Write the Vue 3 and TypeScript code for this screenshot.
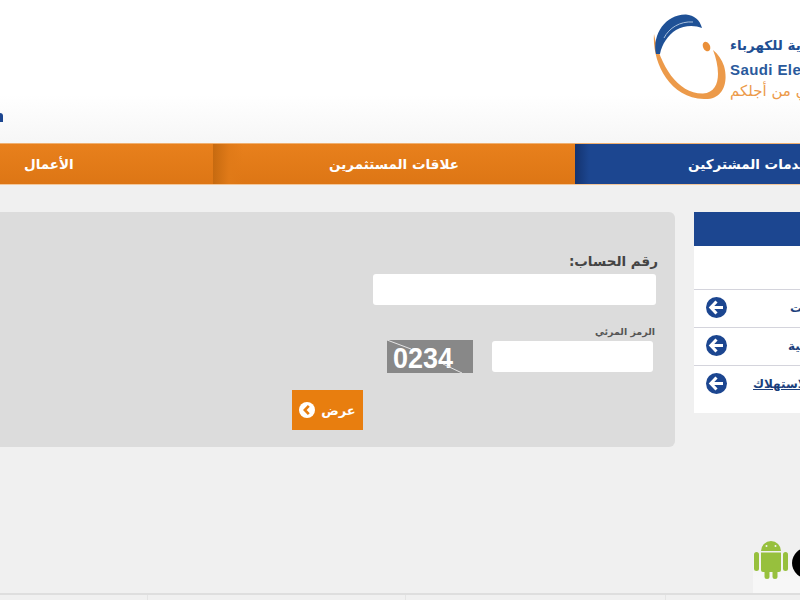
<script setup lang="ts">
const rows: { text: string; gap: number; under: boolean }[] = [
  { text: 'المدفوعات', gap: 63, under: false },
  { text: 'الخدمات الإلكترونية', gap: 61, under: false },
  { text: 'حاسبة الاستهلاك', gap: 26, under: true },
]
</script>

<template>
  <div class="page">
    <header class="top">
      <i class="fragment"></i>
      <div class="brand">
        <svg class="logo" viewBox="652 12 76 90" width="76" height="90" aria-hidden="true">
          <path d="M654 34C652 60 668 98 704 99C722 100 729 84 724 66C722 60 718 54 713 50C720 68 722 92 703 93.500C678 94 660 66 654 34Z" fill="#ec9a4a" />
          <path d="M656 54C652 34 666 14 686 14.500C694 15 700 20 702 28C695 25 684 25 676 30C668 35 662 44 660 54Z" fill="#1f5196" />
          <path d="M664 38C669 28 680 21 693 22" fill="none" stroke="#a9c0dc" stroke-width="1" />
          <ellipse cx="706.500" cy="46.500" rx="3.500" ry="5" transform="rotate(-25 706.500 46.500)" fill="#ea8f38" />
        </svg>
        <div class="words">
          <span class="ar-name">الشركة السعودية للكهرباء</span>
          <span class="en-name">Saudi Electricity Company</span>
          <span class="slogan">نمضي من أجلكم</span>
        </div>
      </div>
    </header>

    <nav class="menu">
      <a class="item first">الأعمال</a>
      <a class="item second">علاقات المستثمرين</a>
      <a class="item third">خدمات المشتركين</a>
    </nav>

    <main class="content">
      <section class="panel">
        <label class="label-main" dir="rtl">رقم الحساب:</label>
        <div class="field wide"></div>
        <label class="label-small" dir="rtl">الرمز المرئي</label>
        <div class="captcha-row">
          <svg class="captcha" viewBox="0 0 86 33" width="86" height="33" role="img">
            <rect width="86" height="33" fill="#888888" />
            <text x="6" y="28" class="captcha-text" textLength="60" lengthAdjust="spacingAndGlyphs">0234</text>
            <path d="M0 0L24 9M56 24L75 33" stroke="#e4e4e4" stroke-width="1" />
          </svg>
          <div class="field narrow"></div>
        </div>
        <button class="show" type="button">
          <svg viewBox="0 0 16 16" width="16" height="16" aria-hidden="true">
            <circle cx="8" cy="8" r="8" fill="#fff" />
            <path d="M9.800 3.800L5.800 8L9.800 12.200" fill="none" stroke="#e87e0f" stroke-width="2.600" />
          </svg>
          <span>عرض</span>
        </button>
      </section>

      <aside class="side">
        <div class="side-head"></div>
        <div class="side-space"></div>
        <a v-for="row in rows" :key="row.text" class="side-row">
          <svg viewBox="0 0 21 21" width="21" height="21" aria-hidden="true">
            <circle cx="10.500" cy="10.500" r="10.500" fill="#1c4690" />
            <path d="M10.500 4.500L4.800 10.500L10.500 16.500M5.500 10.500H17" fill="none" stroke="#fff" stroke-width="3" />
          </svg>
          <span :class="{ under: row.under }" :style="{ marginLeft: row.gap + 'px' }">{{ row.text }}</span>
        </a>
      </aside>
    </main>

    <div class="apps">
      <div class="app-box">
        <svg viewBox="0 0 34 40" width="34" height="40" aria-label="Android" role="img">
          <g fill="#97c03d">
            <rect x="0" y="13" width="5" height="19" rx="2.500" />
            <rect x="29" y="13" width="5" height="19" rx="2.500" />
            <path d="M7 12A10 10 0 0 1 27 12Z" />
            <path d="M7 13.500H27V31a2 2 0 0 1-2 2H9a2 2 0 0 1-2-2Z" />
            <rect x="10.500" y="28" width="5" height="12" rx="2.500" />
            <rect x="18.500" y="28" width="5" height="12" rx="2.500" />
          </g>
          <circle cx="12.500" cy="7" r="1" fill="#f4f4f4" />
          <circle cx="21.500" cy="7" r="1" fill="#f4f4f4" />
        </svg>
        <i class="black-app"></i>
      </div>
    </div>

    <footer class="foot">
      <i></i><i></i><i></i>
    </footer>
  </div>
</template>

<style scoped>
.page {
  width: 800px;
  height: 600px;
  overflow: hidden;
  display: flex;
  flex-direction: column;
  background: #f0f0f0;
  font-family: "DejaVu Sans", "Noto Sans", sans-serif;
}
.top {
  height: 143px;
  flex: none;
  display: flex;
  justify-content: space-between;
  background: linear-gradient(#ffffff 0, #ffffff 95px, #f6f6f6 143px);
}
.fragment {
  width: 3px;
  height: 9px;
  margin-top: 113px;
  border-radius: 0 3px 0 0;
  background: #1c4690;
}
.brand {
  width: 148px;
  display: flex;
  padding-top: 12px;
  box-sizing: border-box;
}
.logo {
  flex: none;
}
.words {
  width: 70px;
  margin-left: 2px;
  overflow: hidden;
  display: flex;
  flex-direction: column;
  white-space: nowrap;
}
.ar-name {
  margin-top: 23px;
  height: 20px;
  line-height: 20px;
  font-size: 13.500px;
  font-weight: 700;
  color: #1f4f93;
}
.en-name {
  margin-top: 5px;
  height: 20px;
  line-height: 20px;
  font-family: "Liberation Sans", sans-serif;
  font-size: 15px;
  font-weight: 700;
  letter-spacing: 0.400px;
  color: #2a5a9c;
}
.slogan {
  height: 22px;
  line-height: 22px;
  font-size: 15px;
  color: #ec9a4a;
}
.menu {
  height: 42px;
  flex: none;
  display: flex;
  border-top: 1px solid #f0b070;
  border-bottom: 1px solid #f3c79a;
  box-sizing: border-box;
}
.item {
  height: 100%;
  flex: none;
  display: flex;
  align-items: center;
  box-sizing: border-box;
  color: #fff;
  font-size: 13.500px;
  font-weight: 700;
  white-space: nowrap;
}
.first {
  width: 213px;
  padding-left: 24px;
  background: linear-gradient(#e8801c, #dd7615);
}
.second {
  width: 362px;
  justify-content: center;
  background: linear-gradient(90deg, #c66a10 0, #e07a18 16px, rgba(224, 122, 24, 0) 30px), linear-gradient(#e8801c, #dd7615);
}
.third {
  width: 300px;
  padding-left: 113px;
  background: linear-gradient(90deg, #14336f 0, #1c4690 14px);
}
.content {
  margin-top: 27px;
  display: flex;
  align-items: flex-start;
  gap: 19px;
  flex: none;
  height: 235px;
}
.panel {
  width: 675px;
  height: 235px;
  flex: none;
  box-sizing: border-box;
  display: flex;
  flex-direction: column;
  align-items: flex-end;
  padding: 41px 17px 0 0;
  border-radius: 0 6px 6px 0;
  background: #dcdcdc;
}
.label-main {
  height: 21px;
  line-height: 16px;
  font-size: 13.500px;
  font-weight: 700;
  color: #444;
}
.field {
  background: #fff;
  border-radius: 3px;
}
.wide {
  width: 283px;
  height: 31px;
  margin-right: 2px;
}
.label-small {
  margin-top: 20px;
  margin-right: 3px;
  height: 15px;
  line-height: 14px;
  font-size: 9.500px;
  font-weight: 700;
  color: #555;
}
.captcha-row {
  display: flex;
  align-items: flex-start;
  gap: 19px;
  margin-right: 5px;
}
.captcha {
  display: block;
}
.captcha-text {
  font-family: "Liberation Sans", sans-serif;
  font-size: 30px;
  font-weight: 700;
  fill: #fff;
}
.narrow {
  width: 161px;
  height: 31px;
  margin-top: 1px;
}
.show {
  width: 71px;
  height: 40px;
  margin: 17px 295px 0 0;
  padding: 0;
  border: 0;
  display: flex;
  align-items: center;
  justify-content: center;
  gap: 6px;
  background: #e87e0f;
  color: #fff;
  font-family: inherit;
  font-size: 13px;
  font-weight: 700;
}
.side {
  width: 300px;
  height: 201px;
  flex: none;
  background: #fff;
}
.side-head {
  height: 34px;
  background: #1c4690;
}
.side-space {
  height: 43px;
}
.side-row {
  height: 38px;
  display: flex;
  align-items: center;
  box-sizing: border-box;
  padding: 0 0 2px 12px;
  border-top: 1px solid #d4d4dc;
  color: #1c3f7c;
  font-size: 12px;
  font-weight: 700;
  white-space: nowrap;
}
.under {
  text-decoration: underline;
}
.apps {
  flex: 1;
  display: flex;
  justify-content: flex-end;
  align-items: flex-end;
}
.app-box {
  width: 47px;
  height: 54px;
  display: flex;
  align-items: flex-start;
  gap: 4px;
  background: linear-gradient(#f0f0f0 10px, #f7f7f7 40px);
  overflow: hidden;
}
.app-box svg {
  flex: none;
  margin-left: 1px;
}
.black-app {
  flex: none;
  width: 34px;
  height: 32px;
  margin-top: 8px;
  border-radius: 50%;
  background: #000;
}
.foot {
  height: 7px;
  flex: none;
  display: flex;
  box-sizing: border-box;
  border-top: 2px solid #dedede;
  background: #f0f0f0;
}
.foot i {
  width: 1px;
  background: #e4e4e4;
  margin-left: 147px;
}
.foot i:nth-child(2) {
  margin-left: 257px;
}
.foot i:nth-child(3) {
  margin-left: 259px;
}
</style>
